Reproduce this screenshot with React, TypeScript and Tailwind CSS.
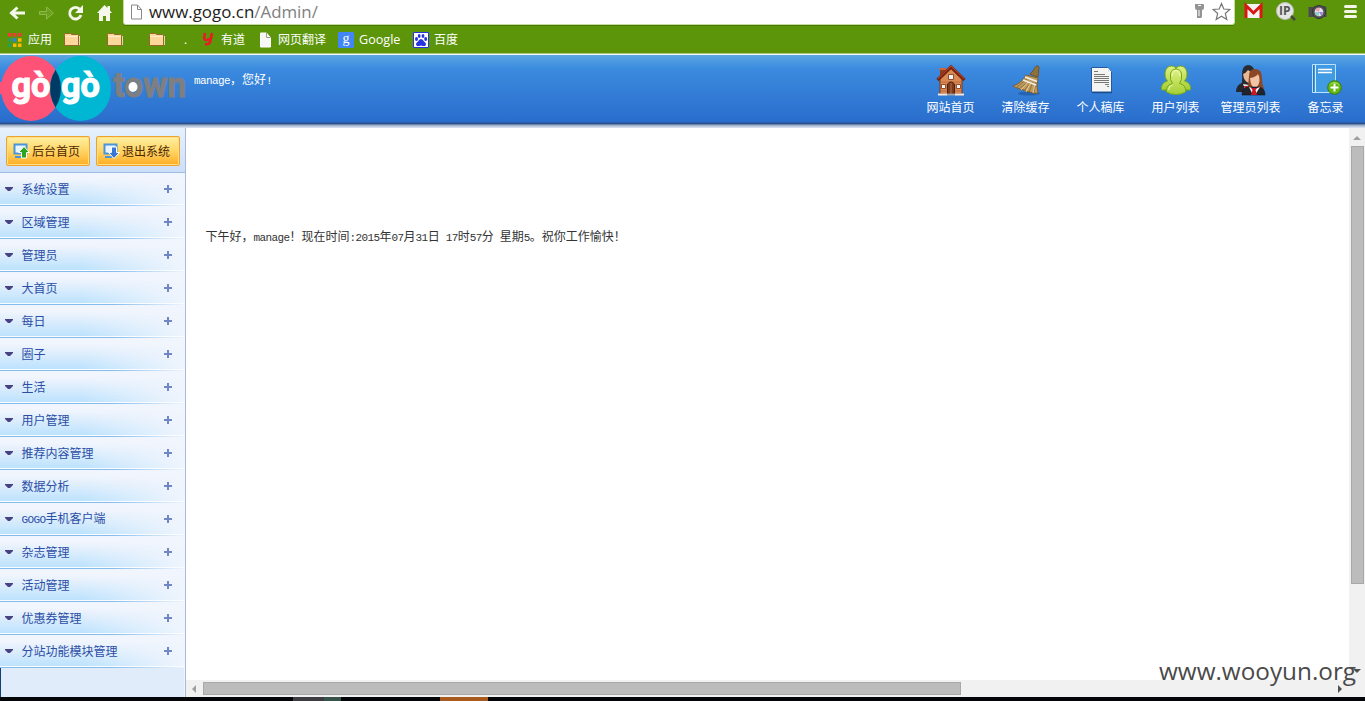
import type { ReactNode } from 'react';

// --- Interfaces ---
interface NavItem { label: string; icon: ReactNode }

const menus = [
  '系统设置', '区域管理', '管理员', '大首页', '每日', '圈子', '生活', '用户管理',
  '推荐内容管理', '数据分析', 'GOGO手机客户端', '杂志管理', '活动管理', '优惠券管理', '分站功能模块管理',
];

// Latin characters take half the width of a Chinese one
function Mixed({ text }: { text: string }) {
  return (
    <>
      {text.split(/([\x20-\x7e]+)/).map((part, i) =>
        i % 2 ? <span key={i} className="whitespace-pre font-['Liberation_Mono',monospace] text-[11px] tracking-[-0.6px]">{part}</span> : part
      )}
    </>
  );
}

function HouseIcon() {
  return (
    <svg width="32" height="32" viewBox="0 0 32 32">
      <path d="M5 5h5v8H5z" fill="#8f3d1d" />
      <path d="M4 4h7v2H4z" fill="#c9653a" />
      <path d="M5 15 16 4l11 11v15H5z" fill="#d98a52" stroke="#7b3416" />
      <path d="M6 18h20M6 21h20M6 24h20M6 27h20" stroke="#b9663a" strokeWidth=".8" />
      <path d="M2.500 16 16 3l13.500 13" fill="none" stroke="#7a2410" strokeWidth="3.200" />
      <path d="M3 14.500 16 2l13 12.500" fill="none" stroke="#c44a28" strokeWidth="1" />
      <path d="M13.500 10.500h5v5h-5zM6.500 20.500h4v4h-4zM21.500 20.500h4v4h-4z" fill="#eef6ff" stroke="#9b4a24" />
      <path d="M12.500 30V20q3.500-4 7 0v10z" fill="#7a3b1c" stroke="#4c210f" />
      <path d="M16 19v11" stroke="#b9703f" />
      <path d="M3 30.500h9M20 30.500h9" stroke="#f4e6dc" strokeWidth="2" />
      <path d="M12 30.500h8" stroke="#a3a3a3" strokeWidth="2" />
    </svg>
  );
}

function BroomIcon() {
  return (
    <svg width="32" height="32" viewBox="0 0 32 32">
      <ellipse cx="19" cy="29.500" rx="11" ry="2" fill="#174a91" opacity=".5" />
      <path d="M23 7q3-6 5-5l1 1-1 10-8-3z" fill="#92743f" stroke="#6f5123" />
      <path d="m16 11 12 3q-2 9 0 15-4 1-8-1-4 0-6-2-4 0-6-2-3 0-5-2 9-3 13-11z" fill="#bd9b60" stroke="#80602b" />
      <path d="m17 15-10 8M19 17 9 25M21 18l-7 9M23 18l-4 10M26 18l-2 11M27 4l-5 7M28 5l-3 8" stroke="#8c6a34" strokeWidth=".9" />
      <path d="m18 18-7 8M25 20l-2 9M20 20l-4 8" stroke="#ead29a" strokeWidth=".9" />
      <path d="m13 16 13 5M15 13l12 4.500" stroke="#f2f0e6" strokeWidth="1.600" />
    </svg>
  );
}

function PaperIcon() {
  return (
    <svg width="32" height="32" viewBox="0 0 32 32">
      <path d="M6.500 3.500h16l4 4.500v20h-20z" fill="#f4f4f2" stroke="#255b9e" />
      <path d="M7 28.700h20" stroke="#18437f" />
      <path d="M22.500 4v4h3.500z" fill="#c9d4df" stroke="#fff" />
      <path d="M9 7.500h4M9 12.500h15M9 14.500h15M9 16.500h15M9 18.500h15M20 20.500h4M22 22.500h2" stroke="#777" />
      <path d="M9 10.500h11" stroke="#777" />
    </svg>
  );
}

function UsersIcon() {
  return (
    <svg width="32" height="32" viewBox="0 0 32 32">
      <defs>
        <linearGradient id="lime" x1="0" y1="0" x2="0" y2="1">
          <stop offset="0" stopColor="#dff083" />
          <stop offset="1" stopColor="#a3cf35" />
        </linearGradient>
      </defs>
      <g fill="url(#lime)" stroke="#79a916">
        <path d="M1.500 26q-1-7 6-9-3-3-2.500-8 1-7 6.500-7 5 0 5.500 6 1 5-2 9v9z" />
        <path d="M30.500 26q1-7-6-9 3-3 2.500-8-1-7-6.500-7-5 0-5.500 6-1 5 2 9v9z" />
        <path d="M6.500 28q-1-7 6-8.500Q9.500 16 10.500 10q1-5 5.500-5t5.500 5q1 6-2 9.500 7 1.500 6 8.500-4 2.500-9.500 2.500T6.500 28z" />
      </g>
      <path d="M12 12q.5-5 4-5.500 3.500.5 4 5.500M8.500 26q.5-4 4-5" fill="none" stroke="#f2fac1" />
    </svg>
  );
}

function AdminsIcon() {
  return (
    <svg width="32" height="32" viewBox="0 0 32 32">
      <path d="M5 24q3-6 2-13 0-10 6-10 6 0 7 8v15z" fill="#292b32" />
      <path d="M8 10q3-1 5-4 4 2 4 6l-3 7q-5-1-6-9z" fill="#e8b897" />
      <path d="M1 28q0-7 6-9l5 2 3 7z" fill="#25272e" />
      <path d="m8 20 3 7 3-6z" fill="#f2f2f2" />
      <path d="m9 22 2 5 2-5z" fill="#c31525" />
      <path d="M12 25q2-7 2-13 0-7 6-7 7 0 7 9 0 6 2 11z" fill="#8b4826" />
      <path d="M15 14q6-1 8-4 2 3 1.500 7-1 6-5 7-4-2-4.500-10z" fill="#f0c4a5" />
      <path d="M7 31q0-7 6-8h11q6 1 6 8z" fill="#22242b" stroke="#15161b" strokeWidth=".6" />
      <path d="m14 23 4 8h2l5-8-5 2z" fill="#f5f5f5" />
      <path d="M16 24h6l-1.500 2L22 31h-6l1.500-5z" fill="#ce1425" />
    </svg>
  );
}

function NotebookIcon() {
  return (
    <svg width="32" height="32" viewBox="0 0 32 32">
      <path d="M2.500.5h23v28h-23z" fill="#419be3" stroke="#b9e2ff" />
      <path d="M5.500 1v27.500" stroke="#d4edff" />
      <path d="M3.500 1v27" stroke="#2877bf" />
      <path d="M8 5.500h14M8 8.500h14" stroke="#fff" strokeWidth="1.400" />
      <circle cx="24.500" cy="23.500" r="6.800" fill="#65b80e" stroke="#397c08" />
      <path d="M19.500 21q5-5 10 0" fill="none" stroke="#a8e25a" />
      <path d="M24.500 19.500v8M20.500 23.500h8" stroke="#fff" strokeWidth="2" />
    </svg>
  );
}

const navItems: NavItem[] = [
  { label: '网站首页', icon: <HouseIcon /> },
  { label: '清除缓存', icon: <BroomIcon /> },
  { label: '个人稿库', icon: <PaperIcon /> },
  { label: '用户列表', icon: <UsersIcon /> },
  { label: '管理员列表', icon: <AdminsIcon /> },
  { label: '备忘录', icon: <NotebookIcon /> },
];

function PageIcon({ light = false }: { light?: boolean }) {
  return (
    <svg width="13" height="16" viewBox="0 0 13 16" className="shrink-0">
      <path d="M1.500 1h6l4 4.500V15h-10z" fill={light ? '#f7f7f7' : '#fff'} stroke={light ? '#fff' : '#888'} />
      <path d="M7.500 1v4.500h4" fill="none" stroke={light ? '#9a9a9a' : '#888'} />
    </svg>
  );
}

function FolderIcon() {
  return (
    <svg width="16" height="16" viewBox="0 0 16 16" className="shrink-0">
      <path d="M.5 3.500v-1q0-1 1-1h5l1 1h6q1 0 1 1v10h-14z" fill="#fbd79b" stroke="#94662c" />
      <path d="M1.500 4.500h12" stroke="#ffeecb" />
      <path d="M15.500 4v9" stroke="#e8d6b8" />
    </svg>
  );
}

function BrowserBar() {
  return (
    <div className="h-[53px] bg-[#5c950a] font-['Open_Sans','Noto_Sans_CJK_SC',sans-serif]">
      <div className="flex h-[25px]">
        <div className="flex w-[123px] shrink-0 items-center pl-[9px]">
          <svg width="112" height="24" viewBox="9 0 112 24">
            <path d="M11 12h14M17.500 6.500 11.500 12l6 5.500" fill="none" stroke="#f5f7ec" strokeWidth="3" />
            <path d="M39.500 10.500h7V6l7 6-7 6v-4.500h-7z" fill="#6ba11e" stroke="#8fb94f" />
            <path d="M80 8.500A5.800 5.800 0 1 0 81 14" fill="none" stroke="#f5f7ec" strokeWidth="2.800" />
            <path d="M83 4v8h-8z" fill="#f5f7ec" />
            <path d="M104.500 4 97 12h2v8h4v-5h3v5h4v-8h2l-2-2.500V5h-2.500v2z" fill="#f5f7ec" />
          </svg>
        </div>
        <div className="flex h-[25px] w-[1112px] shrink-0 items-center rounded-b-[3px] border-x border-b border-[#c4db9c] bg-white pl-[6px] shadow-[0_1px_0_#477707]">
          <PageIcon />
          <span className="ml-[6px] text-[16.900px] leading-6 text-[#222]">www.gogo.cn<span className="text-[#808080]">/Admin/</span></span>
          <svg className="ml-auto" width="40" height="24" viewBox="0 0 40 24">
            <path d="M1 4h8q1 0 1 1v3q0 2-2 2v7l-1 1H3V10q-2 0-2-2V5z" fill="#949494" />
            <path d="M4 5.500h3M5 10v6" stroke="#fff" />
            <path d="m27.500 3.500 2.300 5.500 6 .5-4.500 4 1.500 6-5.300-3.200-5.300 3.200 1.500-6-4.500-4 6-.5z" fill="#fff" stroke="#777" strokeWidth="1.200" />
          </svg>
        </div>
        <svg className="ml-[8px] shrink-0" width="118" height="24" viewBox="0 0 118 24">
          <path d="M2 4h17v14H2z" fill="#f4f4f4" />
          <path d="M3 18V5.500l7.500 7.500L18 5.500V18" fill="none" stroke="#db1712" strokeWidth="3" />
          <circle cx="42" cy="11" r="8.500" fill="#e5e5e3" stroke="#bdbdb7" />
          <path d="m48 16 4 4" stroke="#444" strokeWidth="2.500" />
          <text x="36" y="15" fill="#555" className="text-[12px] font-bold">IP</text>
          <path d="M65.500 7h5l1-1h11v1h1v10h-18z" fill="#4b4c50" />
          <circle cx="76" cy="12" r="6.500" fill="#55565b" stroke="#333" />
          <circle cx="76" cy="12" r="4.300" fill="#e9e6f2" />
          <path d="m76 12-4-2a4.300 4.300 0 0 1 5-2z" fill="#eaa7b3" />
          <path d="M76 12v4a4 4 0 0 1-4-4z" fill="#89d3c3" />
          <path d="M76 12h4a4 4 0 0 1-2 3.500z" fill="#9f83db" />
          <path d="M102.500 6.500h10M102.500 11.500h10M102.500 16.500h10" stroke="#f4f5e9" strokeWidth="3" strokeLinecap="round" />
        </svg>
      </div>
      <div className="flex h-7 items-center pl-[8px] pt-[2px] text-[12px] text-white">
        <svg width="14" height="14" viewBox="0 0 14 14">
          <path d="M0 0h3.500v3.500H0zM5 0h3.500v3.500H5zM10 0h3.500v3.500H10z" fill="#f23b31" />
          <path d="M0 5.200h3.500v3.500H0zM0 10.400h3.500V14H0z" fill="#25a15a" />
          <path d="M5 5.200h3.500v3.500H5z" fill="#2d84ef" />
          <path d="M10 5.200h3.500v3.500H10zM5 10.400h3.500V14H5zM10 10.400h3.500V14H10z" fill="#ffb900" />
        </svg>
        <span className="ml-[6px] w-[24px]">应用</span>
        <div className="ml-[12px] flex w-[101px] justify-between">
          <FolderIcon />
          <FolderIcon />
          <FolderIcon />
        </div>
        <span className="ml-[19px] w-[7px]">.</span>
        <svg className="ml-[11px]" width="12" height="16" viewBox="0 0 12 16">
          <path d="M3 1 2.300 5q-.3 3 2 3 2 0 4-1.500M10 1 8.500 9q-1 4-5.500 3" fill="none" stroke="#e91c23" strokeWidth="2.600" />
        </svg>
        <span className="ml-[7px] w-[24px]">有道</span>
        <div className="ml-[14px]"><PageIcon light /></div>
        <span className="ml-[6px] w-[48px]">网页翻译</span>
        <span className="ml-[12px] h-4 w-4 rounded-[1px] bg-[#4285f4] text-center font-['Liberation_Serif',serif] text-[14px] leading-[14px]">g</span>
        <span className="ml-[5px] w-[42px] text-[12.600px]">Google</span>
        <svg className="ml-[12px]" width="16" height="16" viewBox="0 0 16 16">
          <path d="M.5.5h15v15H.5z" fill="#fff" stroke="#2934df" />
          <g fill="#2934df">
            <ellipse cx="3.500" cy="7" rx="1.500" ry="2" />
            <ellipse cx="6.200" cy="4" rx="1.400" ry="2" />
            <ellipse cx="10" cy="4" rx="1.400" ry="2" />
            <ellipse cx="12.700" cy="7" rx="1.500" ry="2" />
            <path d="M8 7q2 0 3 2.500 3 2 1.500 4-1 1-4.500 0-3.500 1-4.500 0-1.500-2 1.500-4Q6 7 8 7z" />
          </g>
        </svg>
        <span className="ml-[5px]">百度</span>
      </div>
    </div>
  );
}

function Logo() {
  return (
    <svg width="188" height="66" viewBox="0 0 188 66" className="mt-px shrink-0">
      <defs>
        <clipPath id="leftCircle"><ellipse cx="31" cy="32.500" rx="30" ry="32.500" /></clipPath>
      </defs>
      <path d="M0 26h3v12H0z" fill="#ff5277" />
      <ellipse cx="31" cy="32.500" rx="30" ry="32.500" fill="#ff5277" />
      <ellipse cx="80.500" cy="32.500" rx="30.500" ry="32.500" fill="#00b7d3" />
      <ellipse cx="80.500" cy="32.500" rx="30.500" ry="32.500" fill="#003b65" clipPath="url(#leftCircle)" />
      <g fill="#fff" stroke="#fff" strokeWidth="1" className="font-['Roboto',sans-serif] text-[33px] font-bold">
        <text transform="translate(11.500 41) scale(1.040 1.080)">gò</text>
        <text transform="translate(61 41) scale(1.040 1.080)">gò</text>
      </g>
      <text transform="translate(113.500 40.500) scale(1.040 1.080)" fill="#7d7f83" stroke="#7d7f83" strokeWidth=".8" className="font-['Roboto',sans-serif] text-[32px] font-bold">town</text>
      <ellipse cx="133" cy="31" rx="4.500" ry="5" fill="#fff" />
    </svg>
  );
}

function Header() {
  return (
    <>
      <header className="flex h-[68px] border-b border-[#2a5eb0] bg-linear-to-b from-[#5ba6e2] via-[#3b8bdf] via-20% to-[#2a6dcc] text-white">
        <Logo />
        <p className="ml-[6px] mt-[15px] text-[12px] leading-[18px]"><Mixed text="manage，您好!" /></p>
        <nav className="ml-auto flex pr-[2px] pt-[9px]">
          {navItems.map(item => (
            <a key={item.label} className="flex w-[75px] flex-col items-center">
              {item.icon}
              <span className="mt-[2px] text-[12px] leading-[18px]">{item.label}</span>
            </a>
          ))}
        </nav>
      </header>
      <div className="h-[5px] bg-linear-to-b from-[#0d3876] via-[#9bacc7] via-45% to-[#e1eaf6]" />
    </>
  );
}

function SideButton({ label, up }: { label: string; up?: boolean }) {
  return (
    <button className="flex h-[30px] w-[84px] items-center rounded-[2px] border border-[#f0a22b] bg-linear-to-b from-[#fff0a0] via-[#ffd565] via-50% to-[#ffad18] pl-[6px] text-[12px] text-[#4b2702] shadow-[inset_0_0_0_1px_#ffe08a]">
      <svg width="17" height="16" viewBox="0 0 17 16" className="shrink-0">
        <path d="M1.500 1.500h12v9h-12z" fill="#eaf6ff" stroke="#4a94da" strokeWidth="2" />
        <path d="M2 14h7" stroke="#4a94da" strokeWidth="2" />
        {up
          ? <path d="m11 3.500 5.500 6h-3V15H8.500V9.500h-3z" fill="#2aa51d" stroke="#fff" />
          : <path d="m11 15.500 5.500-6h-3V4H8.500v5.500h-3z" fill="#3577d5" stroke="#fff" />}
      </svg>
      <span className="ml-[2px] whitespace-nowrap">{label}</span>
    </button>
  );
}

function Sidebar() {
  return (
    <aside className="flex w-[186px] shrink-0 flex-col border-r border-[#a9b9dc] bg-[#eff5fd]">
      <div className="flex h-[45px] shrink-0 gap-[6px] border-b border-[#9fbce4] bg-linear-to-b from-[#e7f1fd] to-[#cddff7] pl-[6px] pt-[8px]">
        <SideButton label="后台首页" up />
        <SideButton label="退出系统" />
      </div>
      <ul className="shrink-0">
        {menus.map(menu => (
          <li key={menu} className="h-[33px] bg-linear-to-r from-[#84bced] from-60% to-[#eff5fd] pb-px">
            <div className="h-full bg-linear-to-r from-[#bce2fd] from-45% to-[#eff5fd]">
              <div className="flex h-full items-center border-b border-white/70 bg-linear-to-b from-[#f1f5fd] from-20% to-[#f1f5fd]/0 pl-[5px] pr-[13px] text-[12px] text-[#2b4ea6]">
                <svg width="8" height="4" viewBox="0 0 8 4"><path d="M0 0h8v1L5 4H3L0 1z" fill="#484284" /></svg>
                <span className="ml-[8.500px]"><Mixed text={menu} /></span>
                <svg className="ml-auto" width="8" height="8" viewBox="0 0 8 8"><path d="M4 0v8M0 4h8" stroke="#7186c5" strokeWidth="2" /></svg>
              </div>
            </div>
          </li>
        ))}
      </ul>
      <div className="mr-px flex-1 border-l border-[#123d7d] bg-[#e1ecfa]" />
    </aside>
  );
}

function Content() {
  return (
    <main className="flex min-w-0 flex-1 flex-col">
      <div className="flex min-h-0 flex-1">
        <div className="flex-1 bg-white pl-[19.500px] pt-[99px] text-[12px] leading-[18px] text-[#333]">
          <Mixed text="下午好，manage！现在时间:2015年07月31日 17时57分 星期5。祝你工作愉快！" />
        </div>
        <div className="flex w-4 shrink-0 flex-col items-center bg-[#f1f1f1] pb-[7px] pt-[8px]">
          <svg width="8" height="4" viewBox="0 0 8 4"><path d="M4 0 8 4H0z" fill="#a0a0a0" /></svg>
          <div className="ml-px mt-[6px] h-[438px] w-[13px] shrink-0 border border-[#a8a8a8] bg-[#bcbcbc]" />
          <svg className="mt-auto" width="8" height="4" viewBox="0 0 8 4"><path d="M0 0h8L4 4z" fill="#505050" /></svg>
        </div>
      </div>
      <div className="flex h-[17px] shrink-0 items-center bg-[#f1f1f1] pl-[6px] pr-[23px]">
        <svg width="4" height="8" viewBox="0 0 4 8"><path d="M4 0v8L0 4z" fill="#a0a0a0" /></svg>
        <div className="ml-[7px] h-[13px] w-[758px] border border-[#a8a8a8] bg-[#bcbcbc]" />
        <svg className="ml-auto" width="4" height="8" viewBox="0 0 4 8"><path d="M0 0v8l4-4z" fill="#505050" /></svg>
      </div>
    </main>
  );
}

export default function App() {
  return (
    <div className="relative flex h-[701px] w-[1365px] flex-col overflow-hidden bg-white font-['Noto_Sans_CJK_SC',sans-serif]">
      <BrowserBar />
      <div className="h-[2px] border-t border-[#a9c77d] bg-[#f4f8ff]" />
      <Header />
      <div className="flex min-h-0 flex-1">
        <Sidebar />
        <Content />
      </div>
      <div className="flex h-1 shrink-0 bg-[#030509] pl-[293px]">
        <div className="w-[31px] bg-[#3d3d41]" />
        <div className="w-[17px] bg-[#365249]" />
        <div className="ml-[99px] w-[48px] bg-[#a95a1d]" />
      </div>
      <div className="absolute left-[1159px] top-[654px] whitespace-nowrap font-['Open_Sans',sans-serif] text-[24.300px] leading-[34px] text-[#4a4a4a]">www.wooyun.org</div>
    </div>
  );
}
